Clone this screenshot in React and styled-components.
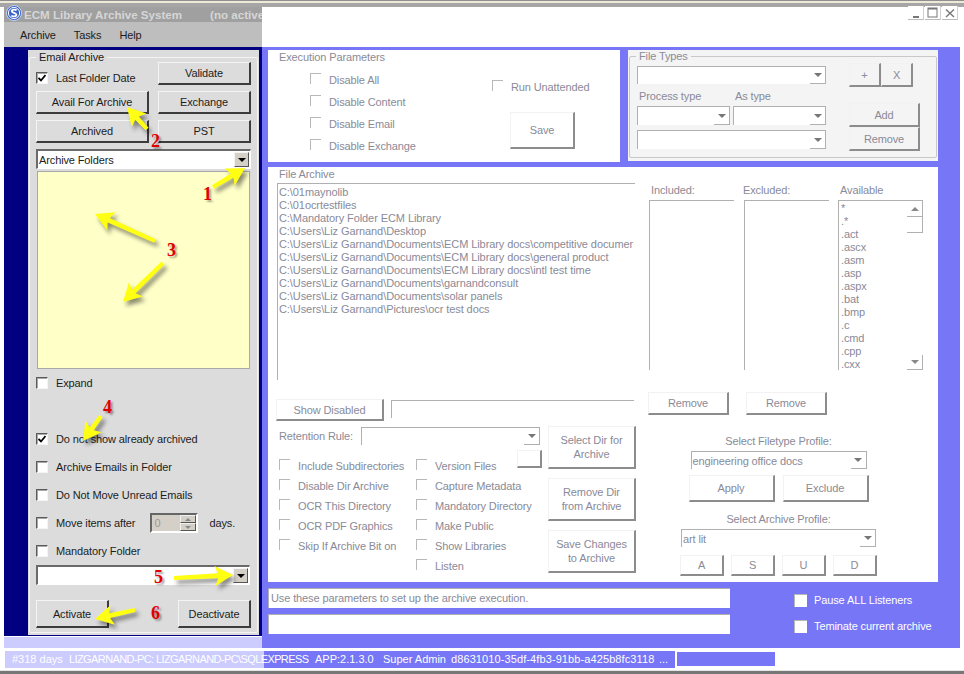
import React from 'react';
import styled, { createGlobalStyle, css } from 'styled-components';

const GlobalStyle = createGlobalStyle`
  html, body {
    margin: 0;
    padding: 0;
    background: #fff;
  }
  * {
    box-sizing: border-box;
  }
`;

const FADED = '#8a8a98';
const BLUE = '#7676f6';

const Page = styled.div`
  position: relative;
  width: 964px;
  height: 674px;
  overflow: hidden;
  display: flex;
  flex-direction: column;
  background: #fff;
  font-family: 'Liberation Sans', Arial, sans-serif;
  font-size: 11px;
  letter-spacing: -0.12px;
  line-height: 14px;
  color: #1c1c1c;
`;

const TopEdge = styled.div`
  height: 7px;
  flex: none;
  background: linear-gradient(#8f8f8f 0, #8f8f8f 1px, #efe9da 1px, #efe9da 3px, #a6a6a6 3px, #a6a6a6 7px);
`;

const Body = styled.div`
  flex: none;
  height: 641px;
  display: flex;
`;

const LeftColumn = styled.div`
  flex: none;
  width: 262px;
  padding-left: 4px;
  display: flex;
  flex-direction: column;
`;

const TitleBar = styled.div`
  flex: none;
  height: 15px;
  background: #a0a0a0;
  display: flex;
  align-items: center;
`;

const TitleIcon = styled.svg`
  flex: none;
  width: 16px;
  height: 16px;
  margin: -3px 2px 0 2px;
`;

const TitleText = styled.div`
  flex: 1;
  min-width: 0;
  overflow: hidden;
  white-space: nowrap;
  font-size: 11.6px;
  letter-spacing: 0;
  font-weight: bold;
  color: #d6d6d6;
`;

const TitleStatus = styled.span`
  margin-left: 28px;
`;

const MenuBar = styled.div`
  flex: none;
  height: 25px;
  background: #bebebe;
  display: flex;
  align-items: center;
  padding-left: 16px;
  gap: 18px;
`;

const NavyBody = styled.div`
  flex: none;
  height: 589px;
  background: #000080;
  padding: 3px 3px 0 24px;
`;

const EmailPanel = styled.div`
  height: 585px;
  background: #dcdcdc;
  padding: 1px 1px 0;
`;

const GroupBox = styled.fieldset`
  margin: 0;
  min-width: 0;
  height: ${p => p.$height}px;
  padding: 0 ${p => p.$padX}px;
  border: 1px solid ${p => p.$line};
  border-radius: 2px;
`;

const GroupLegend = styled.legend`
  margin-left: ${p => p.$left}px;
  padding: 0 3px;
  height: 12px;
  line-height: 12px;
  color: ${p => p.$color || 'inherit'};
`;

const bevel = css`
  display: flex;
  align-items: center;
  justify-content: center;
  font: inherit;
  letter-spacing: inherit;
  text-align: center;
  padding: 0;
  flex: none;
`;

const Button = styled.button`
  ${bevel}
  width: ${p => (p.$w ? `${p.$w}px` : 'auto')};
  height: ${p => p.$h}px;
  background: #dcdcdc;
  color: #1c1c1c;
  border: 1px solid;
  border-color: #f4f4f4 #3c3c3c #3c3c3c #f4f4f4;
  border-width: 1px 2px 2px 1px;
`;

const FadedButton = styled.button`
  ${bevel}
  width: ${p => p.$w}px;
  height: ${p => p.$h}px;
  background: ${p => p.$bg || '#fff'};
  color: ${FADED};
  border: solid;
  border-color: #f2f2f2 #8c8c8c #8c8c8c #f2f2f2;
  border-width: 1px 2px 2px 1px;
`;

const ButtonGrid = styled.div`
  display: grid;
  grid-template-columns: 113px 93px;
  grid-auto-rows: 23px;
  column-gap: 9px;
  row-gap: 6px;
  margin-top: -1px;
`;

const LastFolderCell = styled.div`
  display: flex;
  align-items: center;
  gap: 8px;
  padding-top: 8px;
`;

const SolidBox = styled.span`
  flex: none;
  width: 12px;
  height: 12px;
  background: #fff;
  border: solid;
  border-width: 1px;
  border-color: #5a5a5a #f4f4f4 #f4f4f4 #5a5a5a;
  box-shadow: inset 1px 1px 0 #a8a8a8;
  display: flex;
  align-items: center;
  justify-content: center;
`;

const CheckMark = () => (
  <svg width="8" height="8" viewBox="0 0 8 8">
    <path d="M0.5 4 L3 6.5 L7.5 1" fill="none" stroke="#000" strokeWidth="1.8" />
  </svg>
);

const DropBox = styled.div`
  display: flex;
  justify-content: flex-end;
  align-items: center;
  margin-top: ${p => p.$top || 0}px;
  width: ${p => p.$w}px;
  height: ${p => p.$h}px;
  background: #fff;
  border: solid;
  border-width: 2px 1px 1px 2px;
  border-color: #6a6a6a #fff #fff #6a6a6a;
  padding-left: 1px;
`;

const DropValue = styled.span`
  flex: 1;
  white-space: nowrap;
`;

const DropButton = styled.span`
  flex: none;
  width: 15px;
  height: 15px;
  margin-right: 1px;
  background: #d4d0c8;
  border: 1px solid;
  border-color: #f4f4f4 #555 #555 #f4f4f4;
  display: flex;
  align-items: center;
  justify-content: center;
`;

const Triangle = styled.span`
  width: 0;
  height: 0;
  border-left: ${p => p.$size || 4}px solid transparent;
  border-right: ${p => p.$size || 4}px solid transparent;
  border-top: ${p => p.$size || 4}px solid ${p => p.$color || '#000'};
`;

const NoteBox = styled.div`
  margin: 2px 0 0 1px;
  width: 213px;
  height: 198px;
  background: #ffffc8;
  border: 1px solid #a8a8a8;
`;

const SolidRow = styled.label`
  display: flex;
  align-items: center;
  gap: 8px;
  height: 14px;
  white-space: nowrap;
`;

const ExpandRow = styled(SolidRow)`
  margin-top: 7px;
`;

const OptionStack = styled.div`
  display: flex;
  flex-direction: column;
  gap: 14px;
  margin-top: 42px;
`;

const Spinner = styled.span`
  display: flex;
  align-items: stretch;
  flex: none;
  width: 48px;
  height: 20px;
  margin: 0 3px 0 7px;
  background: #d4d0c8;
  border: 2px solid;
  border-color: #666 #fff #fff #666;
  color: #9a9a9a;
  padding-left: 2px;
  line-height: 16px;
`;

const SpinValue = styled.span`
  flex: 1;
`;

const SpinButtons = styled.span`
  flex: none;
  width: 16px;
  display: flex;
  flex-direction: column;
`;

const SpinPart = styled.span`
  flex: 1;
  background: #d4d0c8;
  border: 1px solid;
  border-color: #f0f0f0 #555 #555 #f0f0f0;
  display: flex;
  align-items: center;
  justify-content: center;
`;

const UpTriangle = styled.span`
  width: 0;
  height: 0;
  border-left: ${p => p.$size || 3}px solid transparent;
  border-right: ${p => p.$size || 3}px solid transparent;
  border-bottom: ${p => p.$size || 3}px solid #888;
`;

const DownTriangle = styled.span`
  width: 0;
  height: 0;
  border-left: ${p => p.$size || 3}px solid transparent;
  border-right: ${p => p.$size || 3}px solid transparent;
  border-top: ${p => p.$size || 3}px solid #888;
`;

const ActivateRow = styled.div`
  display: flex;
  justify-content: space-between;
  width: 215px;
  margin-top: 15px;
`;

const LowerStrip = styled.div`
  flex: 1;
  background: #ccccff;
  margin-top: 1px;
`;

const RightColumn = styled.div`
  flex: none;
  width: 702px;
  display: flex;
  flex-direction: column;
`;

const HeaderWhite = styled.div`
  flex: none;
  height: 40px;
  background: #fff;
  display: flex;
  justify-content: flex-end;
  align-items: flex-start;
  gap: 1px;
  padding-right: 6px;
`;

const WindowButton = styled.span`
  width: 16px;
  height: 14px;
  margin-top: -1px;
  background: #fff;
  border-bottom: 1px solid #bbb;
  border-right: 1px solid #d0d0d0;
  display: flex;
  align-items: center;
  justify-content: center;
`;

const BlueArea = styled.div`
  flex: 1;
  width: 698px;
  background: ${BLUE};
  padding: 3px 0 0 6px;
  display: flex;
  flex-direction: column;
`;

const TopPanels = styled.div`
  display: flex;
  gap: 8px;
`;

const ExecutionPanel = styled.section`
  width: 352px;
  height: 112px;
  background: #fff;
  padding: 0 0 0 11px;
  color: ${FADED};
  display: flex;
`;

const ExecColumn = styled.div`
  width: 211px;
  flex: none;
`;

const PanelTitle = styled.div`
  height: 14px;
  line-height: 14px;
  color: ${FADED};
`;

const ExecChecks = styled.div`
  display: flex;
  flex-direction: column;
  gap: 8px;
  margin: 9px 0 0 31px;
`;

const ExecSide = styled.div`
  margin-left: 2px;
  display: flex;
  flex-direction: column;
  align-items: flex-start;
`;

const FadedRow = styled.label`
  display: flex;
  align-items: center;
  gap: ${p => p.$gap || 8}px;
  height: 14px;
  white-space: nowrap;
  color: ${FADED};
`;

const FadedBox = styled.span`
  flex: none;
  width: 11px;
  height: 11px;
  margin-top: -3px;
  border-top: 1px solid #b8b8b8;
  border-left: 1px solid #b8b8b8;
  background: #fff;
`;

const RunRow = styled(FadedRow)`
  margin-top: 30px;
`;

const SaveButton = styled(FadedButton)`
  margin: 18px 0 0 18px;
`;

const TypesPanel = styled.section`
  width: 310px;
  height: 111px;
  background: #f4f4f4;
  padding: 0 1px;
  color: ${FADED};
`;

const TypesLayout = styled.div`
  display: flex;
`;

const TypesFields = styled.div`
  flex: none;
  width: 219px;
  padding: 4px 0 0 7px;
`;

const TypesActions = styled.div`
  display: flex;
  flex-direction: column;
  padding-top: 1px;
`;

const PlusRow = styled.div`
  display: flex;
  margin-bottom: 16px;
`;

const TypeLabels = styled.div`
  display: flex;
  height: 14px;
  margin: 5px 0 3px 2px;
`;

const TypeLabel = styled.span`
  width: ${p => p.$w}px;
`;

const TypeCombos = styled.div`
  display: flex;
  gap: 3px;
`;

const FadedCombo = styled.div`
  display: flex;
  align-items: center;
  flex: none;
  width: ${p => p.$w}px;
  height: ${p => p.$h || 18}px;
  margin-top: ${p => p.$top || 0}px;
  background: ${p => p.$bg || '#fff'};
  border-top: 1px solid #b0b0b0;
  border-left: 1px solid #b0b0b0;
  padding-left: 1px;
  color: ${FADED};
  white-space: nowrap;
`;

const FadedDrop = styled.span`
  flex: none;
  margin-left: auto;
  width: 16px;
  height: 100%;
  border-right: 1px solid #b0b0b0;
  border-bottom: 1px solid #b0b0b0;
  display: flex;
  align-items: center;
  justify-content: center;
`;

const ArchivePanel = styled.section`
  width: 670px;
  height: 415px;
  margin-top: 5px;
  background: #fff;
  padding: 0 0 0 8px;
  color: ${FADED};
`;

const ArchiveTop = styled.div`
  display: flex;
  height: 213px;
`;

const FolderColumn = styled.div`
  width: 358px;
  margin-left: 1px;
`;

const ArchiveTitle = styled(PanelTitle)`
  margin-left: 2px;
`;

const FolderList = styled.div`
  margin-top: 2px;
  height: 197px;
  border-top: 1px solid #b0b0b0;
  border-left: 1px solid #b0b0b0;
  padding: 2px 0 0 1px;
  line-height: 13px;
  letter-spacing: -0.08px;
  white-space: nowrap;
  overflow: hidden;
`;

const ListsRow = styled.div`
  display: flex;
  margin-left: 14px;
  padding-top: 16px;
`;

const ListColumn = styled.div`
  width: ${p => p.$w}px;
  flex: none;
`;

const ListLabel = styled.div`
  height: 14px;
  margin: 0 0 3px ${p => p.$left}px;
`;

const PlainList = styled.div`
  width: 85px;
  height: 170px;
  border-top: 1px solid #b0b0b0;
  border-left: 1px solid #b0b0b0;
`;

const AvailableList = styled.div`
  width: 85px;
  height: 170px;
  border-top: 1px solid #b0b0b0;
  border-left: 1px solid #b0b0b0;
  display: flex;
  padding-left: 2px;
  overflow: hidden;
`;

const ExtensionItems = styled.div`
  flex: 1;
  line-height: 13px;
  padding-top: 1px;
`;

const FakeScroll = styled.div`
  flex: none;
  width: 16px;
  display: flex;
  flex-direction: column;
`;

const ScrollArrow = styled.span`
  height: 15px;
  display: flex;
  align-items: center;
  justify-content: center;
  border-right: 1px solid #b0b0b0;
`;

const ScrollThumb = styled.span`
  height: 17px;
  border: solid #b0b0b0;
  border-width: 1px 1px 1px 0;
`;

const ScrollDown = styled(ScrollArrow)`
  margin-top: auto;
  border-bottom: 1px solid #b0b0b0;
`;

const ArchiveBottom = styled.div`
  display: flex;
`;

const LowerLeft = styled.div`
  width: 360px;
  flex: none;
  padding-top: 19px;
`;

const DisabledRow = styled.div`
  display: flex;
  gap: 7px;
`;

const PathField = styled.div`
  width: 243px;
  height: 18px;
  margin-top: 1px;
  border-top: 1px solid #b0b0b0;
  border-left: 1px solid #b0b0b0;
`;

const OptionsRow = styled.div`
  display: flex;
  margin-top: 5px;
`;

const OptionsColumn = styled.div`
  width: 268px;
  flex: none;
`;

const RetentionRow = styled.div`
  display: flex;
  align-items: center;
  margin: 1px 0 0 3px;
  white-space: nowrap;
`;

const RetentionLabel = styled.span`
  flex: none;
  width: 82px;
`;

const OptionsGrid = styled.div`
  display: grid;
  grid-template-columns: 137px 126px;
  grid-auto-rows: 20px;
  margin: 11px 0 0 3px;
`;

const OptionCell = styled.div`
  grid-column: ${p => p.$col};
  grid-row: ${p => p.$row};
  display: flex;
  align-items: center;
`;

const SmallButton = styled(FadedButton)`
  align-self: flex-start;
  margin: -6px 0 0 auto;
`;

const DirButtons = styled.div`
  display: flex;
  flex-direction: column;
  gap: 9px;
  margin-left: 4px;
`;

const LowerRight = styled.div`
  margin-left: 12px;
  padding-top: 12px;
`;

const RemoveRow = styled.div`
  display: flex;
  gap: 17px;
`;

const ProfileBlock = styled.div`
  width: 197px;
  margin: 19px 0 0 32px;
  display: flex;
  flex-direction: column;
  align-items: center;
`;

const ProfileLabel = styled.div`
  height: 14px;
  margin-top: ${p => p.$top || 0}px;
`;

const ProfileButtons = styled.div`
  display: flex;
  gap: ${p => p.$gap}px;
  margin-top: ${p => p.$top}px;
`;

const BottomBar = styled.div`
  display: flex;
  padding-top: 6px;
`;

const MessageColumn = styled.div`
  width: 462px;
  display: flex;
  flex-direction: column;
  gap: 6px;
`;

const MessageBox = styled.div`
  height: 20px;
  background: #fff;
  border-top: 1px solid #b0b0b0;
  border-left: 1px solid #b0b0b0;
  padding-left: 2px;
  line-height: 18px;
  color: ${FADED};
`;

const ListenerColumn = styled.div`
  margin-left: 64px;
  padding-top: 5px;
  display: flex;
  flex-direction: column;
  gap: 12px;
`;

const ListenerRow = styled.label`
  display: flex;
  align-items: center;
  gap: 7px;
  height: 14px;
  color: #fff;
`;

const ListenerBox = styled.span`
  width: 13px;
  height: 13px;
  background: #fff;
  border-top: 1px solid #b8b8b8;
  border-left: 1px solid #b8b8b8;
`;

const StatusBar = styled.div`
  flex: none;
  height: 26px;
  display: flex;
  align-items: flex-start;
  padding: 3px 0 0 5px;
  background: #fff;
  border-bottom: 3px solid #777;
  box-shadow: inset 0 -1px 0 #e4e4e4;
`;

const StatusText = styled.div`
  display: flex;
  width: 670px;
  height: 17px;
  line-height: 17px;
  color: #fff;
  white-space: nowrap;
  overflow: hidden;
  background: linear-gradient(90deg, #ccccff 0, #ccccff 259px, ${BLUE} 259px);
  padding-left: 7px;
`;

const StatusPart = styled.span`
  flex: none;
  width: ${p => p.$w}px;
  letter-spacing: ${p => p.$spacing || 0}px;
`;

const StatusGauge = styled.div`
  width: 98px;
  height: 14px;
  margin: 1px 0 0 2px;
  background: ${BLUE};
`;

const Annotations = styled.svg`
  position: absolute;
  left: 0;
  top: 0;
  pointer-events: none;
  filter: drop-shadow(3px 4px 2px rgba(0, 0, 0, 0.45));
`;

const Marker = styled.span`
  position: absolute;
  left: ${p => p.$x}px;
  top: ${p => p.$y}px;
  font-family: 'Liberation Serif', 'Times New Roman', serif;
  font-weight: bold;
  font-size: 18px;
  line-height: 18px;
  color: #e00000;
  text-shadow: 2px 2px 2px rgba(0, 0, 0, 0.35);
`;

const folders = [
  'C:\\01maynolib',
  'C:\\01ocrtestfiles',
  'C:\\Mandatory Folder ECM Library',
  'C:\\Users\\Liz Garnand\\Desktop',
  'C:\\Users\\Liz Garnand\\Documents\\ECM Library docs\\competitive documer',
  'C:\\Users\\Liz Garnand\\Documents\\ECM Library docs\\general product',
  'C:\\Users\\Liz Garnand\\Documents\\ECM Library docs\\intl test time',
  'C:\\Users\\Liz Garnand\\Documents\\garnandconsult',
  'C:\\Users\\Liz Garnand\\Documents\\solar panels',
  'C:\\Users\\Liz Garnand\\Pictures\\ocr test docs',
];

const extensions = ['*', '.*', '.act', '.ascx', '.asm', '.asp', '.aspx', '.bat', '.bmp', '.c', '.cmd', '.cpp', '.cxx'];

const execOptions = ['Disable All', 'Disable Content', 'Disable Email', 'Disable Exchange'];

const dirOptions = [
  ['Include Subdirectories', 'Version Files'],
  ['Disable Dir Archive', 'Capture Metadata'],
  ['OCR This Directory', 'Mandatory Directory'],
  ['OCR PDF Graphics', 'Make Public'],
  ['Skip If Archive Bit on', 'Show Libraries'],
  [null, 'Listen'],
];

// status bar pieces, each with the width it takes up to the next piece
const statusParts = [
  { text: '#318 days', w: 57 },
  { text: 'LIZGARNAND-PC: LIZGARNAND-PC\\SQLEXPRESS', w: 246, spacing: -0.6 },
  { text: 'APP:2.1.3.0', w: 68 },
  { text: 'Super Admin', w: 68 },
  { text: 'd8631010-35df-4fb3-91bb-a425b8fc3118', w: 208, spacing: 0.1 },
  { text: '...', w: 11 },
];

// tail and tip of every yellow arrow drawn over the screenshot
const arrows = [
  [213, 187, 245, 168],
  [147, 129, 127, 107],
  [155, 241, 95, 214],
  [163, 263, 123, 302],
  [101, 416, 83, 441],
  [174, 578, 233, 575],
  [135, 610, 95, 619],
];

const markers = [
  ['1', 203, 185],
  ['2', 151, 132],
  ['3', 167, 241],
  ['4', 103, 398],
  ['5', 154, 568],
  ['6', 151, 604],
];

const arrowPath = ([x1, y1, x2, y2]) => {
  const len = Math.hypot(x2 - x1, y2 - y1);
  const ux = (x2 - x1) / len;
  const uy = (y2 - y1) / len;
  const nx = -uy;
  const ny = ux;
  const at = (along, side) => `${(x1 + ux * along + nx * side).toFixed(1)} ${(y1 + uy * along + ny * side).toFixed(1)}`;
  const neck = len - 15;
  return `M${at(0, -2)} L${at(neck, -2.5)} L${at(neck - 3, -10)} L${x2} ${y2} L${at(neck - 3, 10)} L${at(neck, 2.5)} L${at(0, 2)} Z`;
};

const Option = ({ label }) => (
  <FadedRow>
    <FadedBox />
    {label}
  </FadedRow>
);

const Combo = ({ w, h, top, bg, value }) => (
  <FadedCombo $w={w} $h={h} $top={top} $bg={bg}>
    {value}
    <FadedDrop>
      <Triangle $size={4} $color="#777" />
    </FadedDrop>
  </FadedCombo>
);

const App = () => (
  <Page>
    <GlobalStyle />
    <TopEdge />
    <Body>
      <LeftColumn>
        <TitleBar>
          <TitleIcon viewBox="0 0 16 16">
            <circle cx="8" cy="8" r="7.5" fill="#3a62c8" stroke="#c8d4f0" />
            <circle cx="8" cy="8" r="5.6" fill="none" stroke="#fff" strokeWidth="1" />
            <path d="M10.6 5.4 C9.6 4.2 5.8 4.2 5.8 6.2 C5.8 8.2 10.4 7.6 10.4 9.8 C10.4 11.8 6.4 11.8 5.4 10.4" fill="none" stroke="#fff" strokeWidth="1.8" />
          </TitleIcon>
          <TitleText>
            ECM Library Archive System
            <TitleStatus>(no active</TitleStatus>
          </TitleText>
        </TitleBar>
        <MenuBar>
          <span>Archive</span>
          <span>Tasks</span>
          <span>Help</span>
        </MenuBar>
        <NavyBody>
          <EmailPanel>
            <GroupBox $height={582} $padX={6} $line="#f4f4f4">
              <GroupLegend $left={0}>Email Archive</GroupLegend>
              <ButtonGrid>
                <LastFolderCell>
                  <SolidBox><CheckMark /></SolidBox>
                  Last Folder Date
                </LastFolderCell>
                <Button $h={23}>Validate</Button>
                <Button $h={23}>Avail For Archive</Button>
                <Button $h={23}>Exchange</Button>
                <Button $h={23}>Archived</Button>
                <Button $h={23}>PST</Button>
              </ButtonGrid>
              <DropBox $w={215} $h={20} $top={6}>
                <DropValue>Archive Folders</DropValue>
                <DropButton><Triangle /></DropButton>
              </DropBox>
              <NoteBox />
              <ExpandRow>
                <SolidBox />
                Expand
              </ExpandRow>
              <OptionStack>
                <SolidRow><SolidBox><CheckMark /></SolidBox>Do not show already archived</SolidRow>
                <SolidRow><SolidBox />Archive Emails in Folder</SolidRow>
                <SolidRow><SolidBox />Do Not Move Unread Emails</SolidRow>
                <SolidRow>
                  <SolidBox />
                  Move items after
                  <Spinner>
                    <SpinValue>0</SpinValue>
                    <SpinButtons>
                      <SpinPart><UpTriangle /></SpinPart>
                      <SpinPart><DownTriangle /></SpinPart>
                    </SpinButtons>
                  </Spinner>
                  days.
                </SolidRow>
                <SolidRow><SolidBox />Mandatory Folder</SolidRow>
              </OptionStack>
              <DropBox $w={214} $h={20} $top={7}>
                <DropValue />
                <DropButton><Triangle /></DropButton>
              </DropBox>
              <ActivateRow>
                <Button $w={73} $h={28}>Activate</Button>
                <Button $w={73} $h={28}>Deactivate</Button>
              </ActivateRow>
            </GroupBox>
          </EmailPanel>
        </NavyBody>
        <LowerStrip />
      </LeftColumn>

      <RightColumn>
        <HeaderWhite>
          <WindowButton>
            <svg width="10" height="10" viewBox="0 0 10 10"><rect x="2" y="8" width="6" height="2" fill="#777" /></svg>
          </WindowButton>
          <WindowButton>
            <svg width="11" height="11" viewBox="0 0 11 11"><rect x="1" y="1" width="9" height="9" fill="none" stroke="#777" /><rect x="1" y="1" width="9" height="1.5" fill="#777" /></svg>
          </WindowButton>
          <WindowButton>
            <svg width="10" height="10" viewBox="0 0 10 10"><path d="M1 1.5 L9 9 M9 1.5 L1 9" stroke="#777" strokeWidth="1.4" /></svg>
          </WindowButton>
        </HeaderWhite>
        <BlueArea>
          <TopPanels>
            <ExecutionPanel>
              <ExecColumn>
                <PanelTitle>Execution Parameters</PanelTitle>
                <ExecChecks>
                  {execOptions.map(label => <Option key={label} label={label} />)}
                </ExecChecks>
              </ExecColumn>
              <ExecSide>
                <RunRow><FadedBox />Run Unattended</RunRow>
                <SaveButton $w={65} $h={37}>Save</SaveButton>
              </ExecSide>
            </ExecutionPanel>
            <TypesPanel>
              <GroupBox $height={108} $padX={0} $line="#c8c8c8">
                <GroupLegend $left={6} $color={FADED}>File Types</GroupLegend>
                <TypesLayout>
                  <TypesFields>
                    <Combo w={189} bg="#fff" />
                    <TypeLabels>
                      <TypeLabel $w={96}>Process type</TypeLabel>
                      <TypeLabel $w={90}>As type</TypeLabel>
                    </TypeLabels>
                    <TypeCombos>
                      <Combo w={93} h={19} />
                      <Combo w={93} h={19} />
                    </TypeCombos>
                    <Combo w={189} h={19} top={5} />
                  </TypesFields>
                  <TypesActions>
                    <PlusRow>
                      <FadedButton $w={32} $h={24} $bg="#f4f4f4">+</FadedButton>
                      <FadedButton $w={32} $h={24} $bg="#f4f4f4">X</FadedButton>
                    </PlusRow>
                    <FadedButton $w={71} $h={24} $bg="#f4f4f4">Add</FadedButton>
                    <FadedButton $w={71} $h={24} $bg="#f4f4f4">Remove</FadedButton>
                  </TypesActions>
                </TypesLayout>
              </GroupBox>
            </TypesPanel>
          </TopPanels>

          <ArchivePanel>
            <ArchiveTop>
              <FolderColumn>
                <ArchiveTitle>File Archive</ArchiveTitle>
                <FolderList>
                  {folders.map(path => <div key={path}>{path}</div>)}
                </FolderList>
              </FolderColumn>
              <ListsRow>
                <ListColumn $w={95}>
                  <ListLabel $left={2}>Included:</ListLabel>
                  <PlainList />
                </ListColumn>
                <ListColumn $w={94}>
                  <ListLabel $left={-1}>Excluded:</ListLabel>
                  <PlainList />
                </ListColumn>
                <ListColumn $w={85}>
                  <ListLabel $left={2}>Available</ListLabel>
                  <AvailableList>
                    <ExtensionItems>
                      {extensions.map(ext => <div key={ext}>{ext}</div>)}
                    </ExtensionItems>
                    <FakeScroll>
                      <ScrollArrow><UpTriangle $size={4} /></ScrollArrow>
                      <ScrollThumb />
                      <ScrollDown><DownTriangle $size={4} /></ScrollDown>
                    </FakeScroll>
                  </AvailableList>
                </ListColumn>
              </ListsRow>
            </ArchiveTop>

            <ArchiveBottom>
              <LowerLeft>
                <DisabledRow>
                  <FadedButton $w={108} $h={22}>Show Disabled</FadedButton>
                  <PathField />
                </DisabledRow>
                <OptionsRow>
                  <OptionsColumn>
                    <RetentionRow>
                      <RetentionLabel>Retention Rule:</RetentionLabel>
                      <Combo w={179} />
                    </RetentionRow>
                    <OptionsGrid>
                      {dirOptions.map(([first, second], row) => (
                        <React.Fragment key={second}>
                          {first && (
                            <OptionCell $col={1} $row={row + 1}>
                              <Option label={first} />
                            </OptionCell>
                          )}
                          <OptionCell $col={2} $row={row + 1}>
                            <Option label={second} />
                            {row === 0 && <SmallButton $w={25} $h={18} />}
                          </OptionCell>
                        </React.Fragment>
                      ))}
                    </OptionsGrid>
                  </OptionsColumn>
                  <DirButtons>
                    <FadedButton $w={88} $h={43}>Select Dir for<br />Archive</FadedButton>
                    <FadedButton $w={88} $h={43}>Remove Dir<br />from Archive</FadedButton>
                    <FadedButton $w={88} $h={43}>Save Changes<br />to Archive</FadedButton>
                  </DirButtons>
                </OptionsRow>
              </LowerLeft>
              <LowerRight>
                <RemoveRow>
                  <FadedButton $w={81} $h={23}>Remove</FadedButton>
                  <FadedButton $w={81} $h={23}>Remove</FadedButton>
                </RemoveRow>
                <ProfileBlock>
                  <ProfileLabel>Select Filetype Profile:</ProfileLabel>
                  <Combo w={176} top={3} value="engineering office docs" />
                  <ProfileButtons $gap={8} $top={6}>
                    <FadedButton $w={86} $h={27}>Apply</FadedButton>
                    <FadedButton $w={86} $h={27}>Exclude</FadedButton>
                  </ProfileButtons>
                  <ProfileLabel $top={10}>Select Archive Profile:</ProfileLabel>
                  <Combo w={195} top={3} value="art lit" />
                  <ProfileButtons $gap={7} $top={8}>
                    <FadedButton $w={44} $h={21}>A</FadedButton>
                    <FadedButton $w={44} $h={21}>S</FadedButton>
                    <FadedButton $w={44} $h={21}>U</FadedButton>
                    <FadedButton $w={44} $h={21}>D</FadedButton>
                  </ProfileButtons>
                </ProfileBlock>
              </LowerRight>
            </ArchiveBottom>
          </ArchivePanel>

          <BottomBar>
            <MessageColumn>
              <MessageBox>Use these parameters to set up the archive execution.</MessageBox>
              <MessageBox />
            </MessageColumn>
            <ListenerColumn>
              <ListenerRow><ListenerBox />Pause ALL Listeners</ListenerRow>
              <ListenerRow><ListenerBox />Teminate current archive</ListenerRow>
            </ListenerColumn>
          </BottomBar>
        </BlueArea>
      </RightColumn>
    </Body>

    <StatusBar>
      <StatusText>
        {statusParts.map(part => (
          <StatusPart key={part.text} $w={part.w} $spacing={part.spacing}>{part.text}</StatusPart>
        ))}
      </StatusText>
      <StatusGauge />
    </StatusBar>

    <Annotations width="964" height="674" viewBox="0 0 964 674">
      {arrows.map(arrow => (
        <path key={arrow.join('-')} d={arrowPath(arrow)} fill="#ffff14" />
      ))}
    </Annotations>
    {markers.map(([label, x, y]) => (
      <Marker key={label} $x={x} $y={y}>{label}</Marker>
    ))}
  </Page>
);

export default App;
